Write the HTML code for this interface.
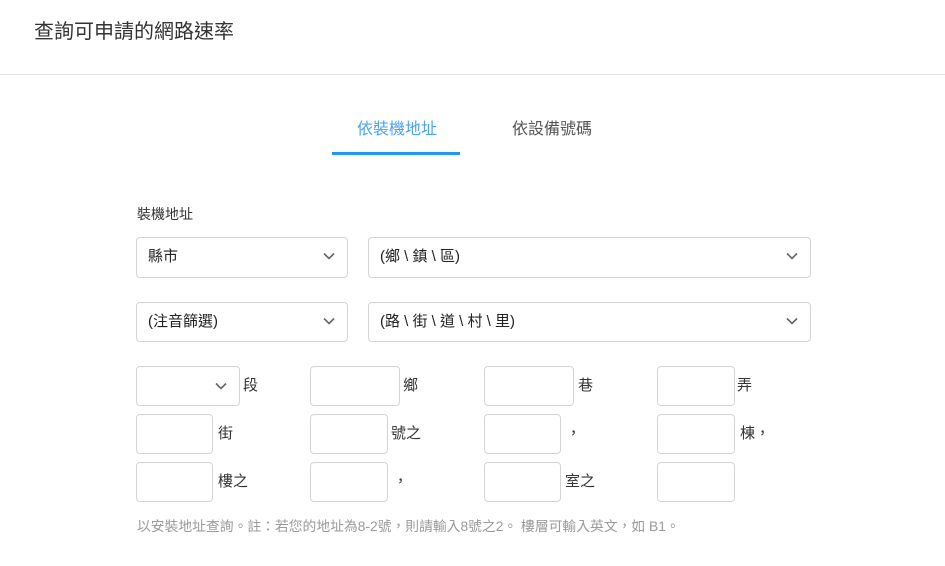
<!DOCTYPE html>
<html><head><meta charset="utf-8"><style>
body{margin:0;width:945px;height:566px;background:#fff;font-family:"Liberation Sans","Noto Sans CJK TC",sans-serif;color:#333;position:relative;overflow:hidden}
.a{position:absolute}
.box{position:absolute;border:1px solid #d4d4d4;border-radius:4px;box-sizing:border-box;background:#fff}
.sel{font-size:15px;color:#222;line-height:38px;padding-left:11px}
.chev{position:absolute;right:12px;top:14px;width:12px;height:8px}
.lb{position:absolute;font-size:15px;color:#333;line-height:20px}
</style></head><body>
<div class="a" style="left:34px;top:18px;font-size:20px;color:#333;line-height:28px">查詢可申請的網路速率</div>
<div class="a" style="left:0;top:74px;width:945px;height:1px;background:#e3e3e3"></div>
<div class="a" style="left:357px;top:120px;font-size:16px;color:#4aa3f0;line-height:20px">依裝機地址</div>
<div class="a" style="left:512px;top:120px;font-size:16px;color:#555;line-height:20px">依設備號碼</div>
<div class="a" style="left:332px;top:152px;width:128px;height:3px;background:#2196f3"></div>
<div class="a" style="left:137px;top:204px;font-size:14px;color:#333;line-height:20px">裝機地址</div>

<div class="box sel" style="left:136px;top:237px;width:212px;height:41px">縣市<svg class="chev" viewBox="0 0 12 8"><path d="M1 1.5l5 5 5-5" fill="none" stroke="#666" stroke-width="1.6"/></svg></div>
<div class="box sel" style="left:368px;top:237px;width:443px;height:41px">(鄉 \ 鎮 \ 區)<svg class="chev" viewBox="0 0 12 8"><path d="M1 1.5l5 5 5-5" fill="none" stroke="#666" stroke-width="1.6"/></svg></div>
<div class="box sel" style="left:136px;top:302px;width:212px;height:40px">(注音篩選)<svg class="chev" viewBox="0 0 12 8"><path d="M1 1.5l5 5 5-5" fill="none" stroke="#666" stroke-width="1.6"/></svg></div>
<div class="box sel" style="left:368px;top:302px;width:443px;height:40px">(路 \ 街 \ 道 \ 村 \ 里)<svg class="chev" viewBox="0 0 12 8"><path d="M1 1.5l5 5 5-5" fill="none" stroke="#666" stroke-width="1.6"/></svg></div>

<div class="box" style="left:136px;top:366px;width:104px;height:40px"><svg class="chev" style="right:12px;top:15px" viewBox="0 0 12 8"><path d="M1 1.5l5 5 5-5" fill="none" stroke="#666" stroke-width="1.6"/></svg></div>
<div class="lb" style="left:243px;top:376px">段</div>
<div class="box" style="left:310px;top:366px;width:90px;height:40px"></div>
<div class="lb" style="left:403px;top:376px">鄉</div>
<div class="box" style="left:484px;top:366px;width:90px;height:40px"></div>
<div class="lb" style="left:578px;top:376px">巷</div>
<div class="box" style="left:657px;top:366px;width:78px;height:40px"></div>
<div class="lb" style="left:737px;top:376px">弄</div>

<div class="box" style="left:136px;top:414px;width:77px;height:40px"></div>
<div class="lb" style="left:218px;top:424px">街</div>
<div class="box" style="left:310px;top:414px;width:78px;height:40px"></div>
<div class="lb" style="left:391px;top:424px">號之</div>
<div class="box" style="left:484px;top:414px;width:77px;height:40px"></div>
<div class="lb" style="left:566px;top:424px">，</div>
<div class="box" style="left:657px;top:414px;width:78px;height:40px"></div>
<div class="lb" style="left:740px;top:424px">棟，</div>

<div class="box" style="left:136px;top:462px;width:77px;height:40px"></div>
<div class="lb" style="left:218px;top:472px">樓之</div>
<div class="box" style="left:310px;top:462px;width:78px;height:40px"></div>
<div class="lb" style="left:393px;top:472px">，</div>
<div class="box" style="left:484px;top:462px;width:77px;height:40px"></div>
<div class="lb" style="left:565px;top:472px">室之</div>
<div class="box" style="left:657px;top:462px;width:78px;height:40px"></div>

<div class="a" style="left:137px;top:518px;font-size:13.8px;color:#9a9a9a;line-height:18px">以安裝地址查詢。註：若您的地址為8-2號，則請輸入8號之2。 樓層可輸入英文，如 B1。</div>
</body></html>
